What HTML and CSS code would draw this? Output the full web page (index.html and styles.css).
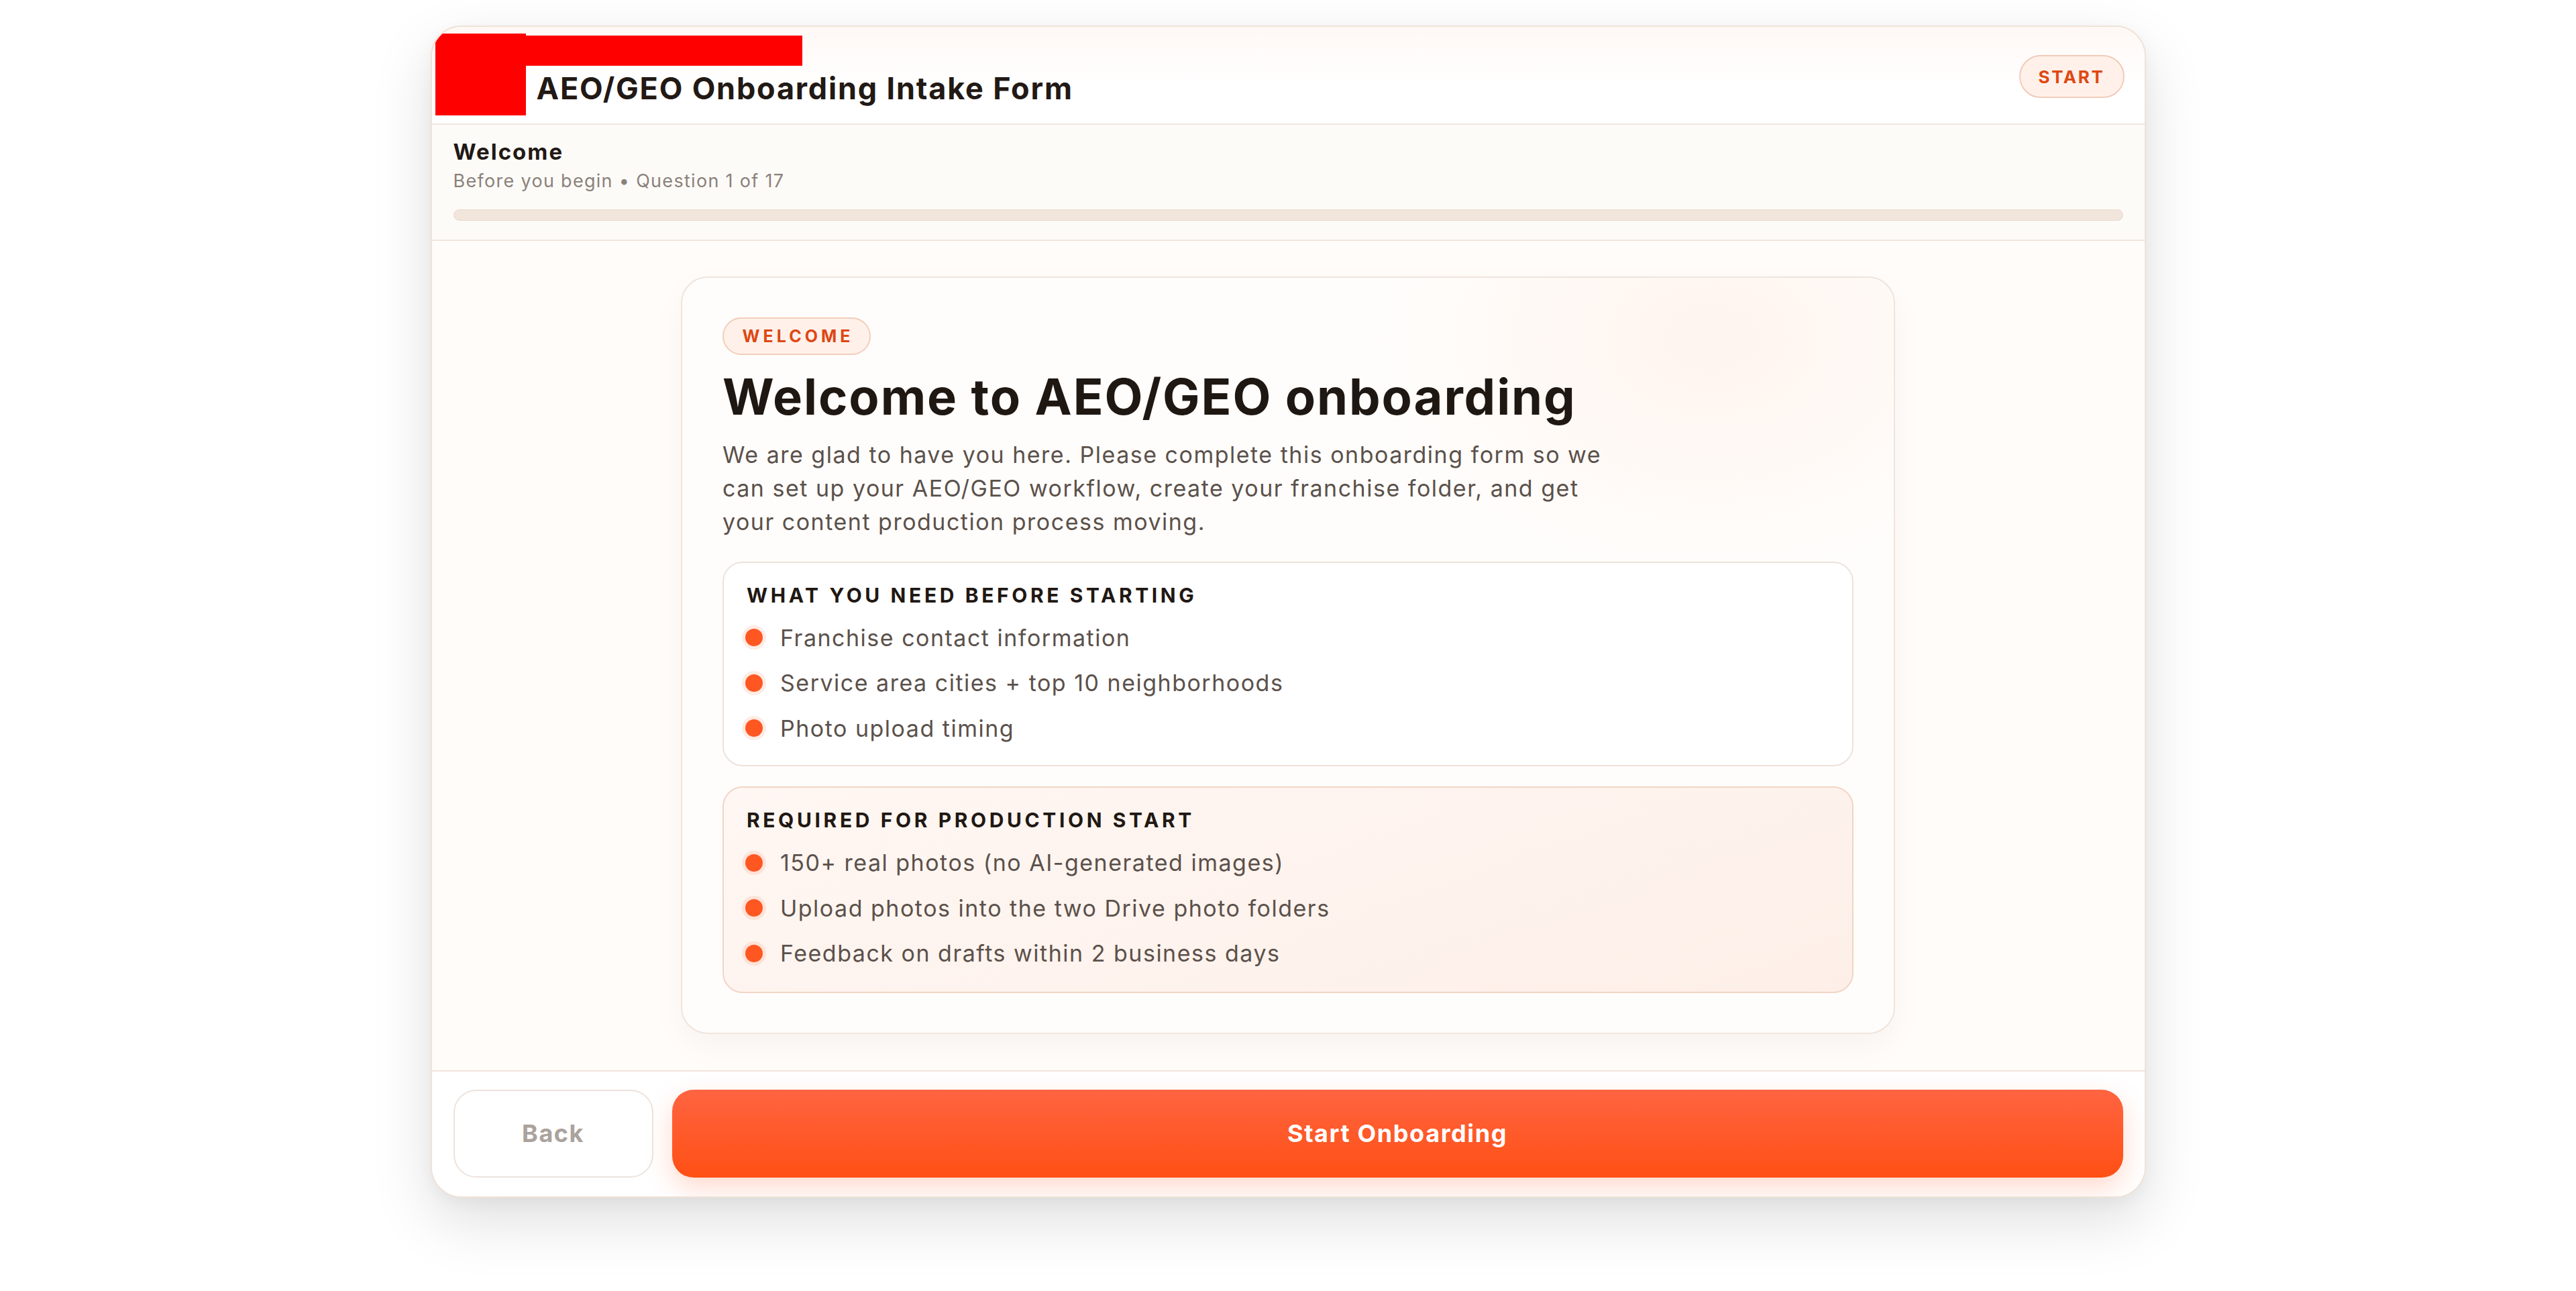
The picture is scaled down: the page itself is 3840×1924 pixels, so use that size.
FILE: index.html
```html
<!DOCTYPE html>
<html lang="en">
<head>
<meta charset="utf-8">
<title>AEO/GEO Onboarding Intake Form</title>
<link rel="stylesheet" href="styles.css">
</head>
<body>
<div class="page">
  <main class="shell">
    <header class="topbar">
      <div class="logo-slot"></div>
      <div class="redact-bar"></div>
      <h1 class="app-title">AEO/GEO Onboarding Intake Form</h1>
      <span class="status-pill">START</span>
    </header>

    <section class="progress">
      <div class="progress-title">Welcome</div>
      <div class="progress-sub">Before you begin • Question 1 of 17</div>
      <div class="progress-track"><div class="progress-fill" style="width:0%"></div></div>
    </section>

    <section class="content">
      <article class="welcome-card">
        <span class="tag">WELCOME</span>
        <h2 class="welcome-title">Welcome to AEO/GEO onboarding</h2>
        <p class="welcome-text">We are glad to have you here. Please complete this onboarding form so we can set up your AEO/GEO workflow, create your franchise folder, and get your content production process moving.</p>

        <div class="info-box">
          <h3 class="info-heading">WHAT YOU NEED BEFORE STARTING</h3>
          <ul class="info-list">
            <li><span class="dot"></span>Franchise contact information</li>
            <li><span class="dot"></span>Service area cities + top 10 neighborhoods</li>
            <li><span class="dot"></span>Photo upload timing</li>
          </ul>
        </div>

        <div class="info-box info-box--warm">
          <h3 class="info-heading">REQUIRED FOR PRODUCTION START</h3>
          <ul class="info-list">
            <li><span class="dot"></span>150+ real photos (no AI-generated images)</li>
            <li><span class="dot"></span>Upload photos into the two Drive photo folders</li>
            <li><span class="dot"></span>Feedback on drafts within 2 business days</li>
          </ul>
        </div>
      </article>
    </section>

    <footer class="actions">
      <button class="btn-back" type="button">Back</button>
      <button class="btn-start" type="button">Start Onboarding</button>
    </footer>
  </main>
</div>
</body>
</html>
```

FILE: styles.css
```css
* { box-sizing: border-box; }

html, body {
  margin: 0;
  padding: 0;
  background: #ffffff;
  font-family: "Inter", "Noto Sans", "Liberation Sans", sans-serif;
  color: #231a15;
}

.page {
  min-height: 100vh;
  padding-top: 38px;
}

.shell {
  width: 2557px;
  margin: 0 auto;
  border: 2px solid #efe2d8;
  border-radius: 46px;
  overflow: hidden;
  background: #fffdfb;
  box-shadow: 0 34px 90px rgba(0, 0, 0, 0.13), 0 8px 24px rgba(0, 0, 0, 0.04);
}

/* header */
.topbar {
  position: relative;
  display: flex;
  align-items: flex-start;
  height: 146px;
  padding: 10px 30px 0 5px;
  border-bottom: 2px solid #f0e5dd;
  background: linear-gradient(180deg, #fff8f5 0%, #ffffff 60%);
}

.logo-slot {
  width: 135px;
  height: 122px;
  background: #ff0000;
  flex: none;
}

.redact-bar {
  position: absolute;
  left: 140px;
  top: 13px;
  width: 412px;
  height: 45px;
  background: #ff0000;
}

.app-title {
  margin: 59px 0 0 16px;
  font-size: 45px;
  line-height: 1;
  font-weight: 700;
  letter-spacing: 1.8px;
  color: #221915;
}

.status-pill {
  margin-left: auto;
  margin-top: 32px;
  width: 157px;
  height: 64px;
  display: flex;
  align-items: center;
  justify-content: center;
  border: 2px solid #f1cbb9;
  border-radius: 32px;
  background: #fff1ea;
  color: #df4814;
  font-size: 26px;
  font-weight: 700;
  letter-spacing: 2.6px;
}

/* progress */
.progress {
  padding: 20px 32px 28px;
  background: #fdfbf8;
  border-bottom: 2px solid #f0e5dd;
}

.progress-title {
  font-size: 33px;
  line-height: 1.26;
  font-weight: 700;
  letter-spacing: 2px;
  color: #221915;
}

.progress-sub {
  margin-top: 4px;
  font-size: 27px;
  line-height: 1.3;
  letter-spacing: 1.3px;
  color: #8b817b;
}

.progress-track {
  margin-top: 25px;
  height: 17px;
  border-radius: 10px;
  background: #f1e5dc;
  border: 1px solid #ead9cd;
  overflow: hidden;
}

.progress-fill {
  height: 100%;
  background: #ff5a24;
}

/* content */
.content {
  display: flex;
  justify-content: center;
  padding: 53px 0 54px;
  background: #fffcf9;
}

.welcome-card {
  width: 1810px;
  padding: 59px 60px 59px;
  border: 2px solid #f0e4dc;
  border-radius: 40px;
  background:
    radial-gradient(ellipse 700px 500px at 85% 8%, rgba(255, 228, 215, 0.35), rgba(255, 228, 215, 0) 70%),
    #fffdfb;
  box-shadow: 0 18px 50px rgba(60, 30, 10, 0.04);
}

.tag {
  display: inline-flex;
  align-items: center;
  justify-content: center;
  width: 221px;
  height: 56px;
  border: 2px solid #f2cdbb;
  border-radius: 28px;
  background: #fff1ea;
  color: #de4714;
  font-size: 25px;
  font-weight: 700;
  letter-spacing: 5px;
  padding-left: 4px;
}

.welcome-title {
  margin: 20px 0 0;
  font-size: 74px;
  line-height: 84px;
  font-weight: 700;
  letter-spacing: 1.9px;
  color: #1f1712;
}

.welcome-text {
  margin: 20px 0 0;
  max-width: 1330px;
  font-size: 34px;
  line-height: 50px;
  letter-spacing: 1.5px;
  color: #5b514b;
}

.info-box {
  margin-top: 34px;
  padding: 31px 34px 30px;
  border: 2px solid #eee2d9;
  border-radius: 30px;
  background: #ffffff;
}

.info-box--warm {
  margin-top: 30px;
  padding-bottom: 32px;
  border-color: #f2d4c5;
  background: linear-gradient(160deg, #fff7f3 0%, #fdefe8 100%);
}

.info-heading {
  margin: 0;
  font-size: 30px;
  line-height: 34px;
  font-weight: 700;
  letter-spacing: 4.6px;
  color: #211813;
}

.info-list {
  list-style: none;
  margin: 22px 0 0;
  padding: 0;
  display: flex;
  flex-direction: column;
  gap: 18px;
}

.info-list li {
  display: flex;
  align-items: center;
  gap: 26px;
  font-size: 34px;
  line-height: 49.5px;
  letter-spacing: 1.5px;
  color: #5b514b;
}

.dot {
  flex: none;
  width: 26px;
  height: 26px;
  margin-left: -2px;
  border-radius: 50%;
  background: #ff5722;
  box-shadow: 0 0 0 5px rgba(255, 87, 34, 0.12);
}

/* footer */
.actions {
  display: flex;
  gap: 28px;
  padding: 27px 32px 28px;
  border-top: 2px solid #f0e5dd;
  background: #ffffff;
}

.btn-back {
  width: 298px;
  height: 131px;
  border: 2px solid #ede3dc;
  border-radius: 34px;
  background: #ffffff;
  color: #aaa29c;
  font-family: inherit;
  font-size: 36px;
  font-weight: 700;
  letter-spacing: 1.5px;
}

.btn-start {
  flex: 1;
  height: 131px;
  border: none;
  border-radius: 32px;
  background: linear-gradient(180deg, #ff6441 0%, #ff5014 100%);
  color: #ffffff;
  font-family: inherit;
  font-size: 36px;
  font-weight: 700;
  letter-spacing: 1.6px;
  box-shadow: 0 16px 40px rgba(255, 86, 34, 0.22);
}
```
